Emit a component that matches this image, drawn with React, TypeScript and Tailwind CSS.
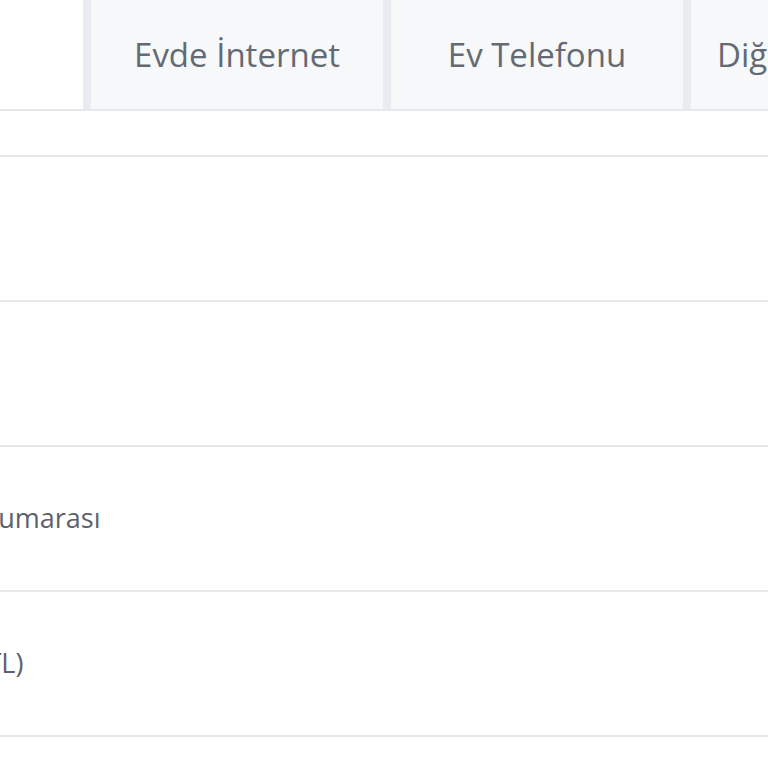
const tabs = ['Evde İnternet', 'Ev Telefonu', 'Diğer Hizmetler'];

const rows = [
  { label: '', h: 'h-[46px]' },
  { label: '', h: 'h-[145px]' },
  { label: '', h: 'h-[145px]' },
  { label: 'Telefon Numarası', h: 'h-[145px]' },
  { label: 'Toplam (TL)', h: 'h-[145px]' },
];

export default function App() {
  return (
    <div className="w-[768px] h-[768px] overflow-hidden bg-white font-['Open_Sans',sans-serif]">
      <div className="flex h-[111px] border-b-2 border-[#e6e8eb]">
        <div className="w-[83px] shrink-0" />
        {tabs.map((t) => (
          <div
            key={t}
            className="w-[300px] shrink-0 border-l-8 border-[#e8ebef] bg-[#f6f8fa] flex items-center justify-center whitespace-nowrap text-[33px] text-[#646a74]"
          >
            {t}
          </div>
        ))}
      </div>
      <div className="flex flex-col">
        {rows.map((r, i) => (
          <div key={i} className={`${r.h} border-b-2 border-[#e6e8eb] flex items-center`}>
            <span className="-ml-[123px] whitespace-nowrap text-[27px] text-[#5c616c]">{r.label}</span>
          </div>
        ))}
      </div>
    </div>
  );
}
